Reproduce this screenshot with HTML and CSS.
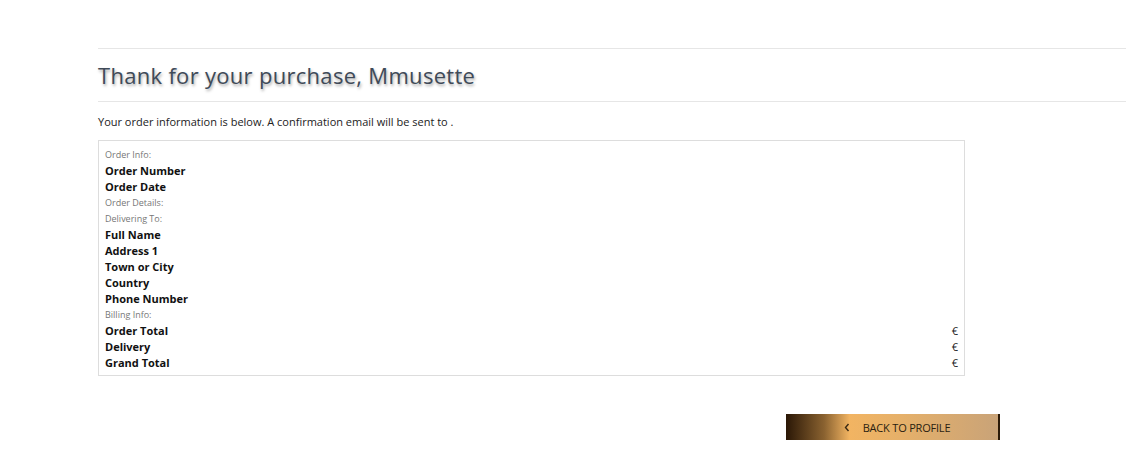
FILE: index.html
```html
<!DOCTYPE html>
<html>
<head>
<meta charset="utf-8">
<link rel="stylesheet" href="styles.css">
</head>
<body>
<div class="page">
  <div class="title-block">
    <h1 class="title">Thank for your purchase, Mmusette</h1>
  </div>
  <p class="intro">Your order information is below. A confirmation email will be sent to .</p>
  <div class="order-box">
    <div class="row label">Order Info:</div>
    <div class="row key">Order Number</div>
    <div class="row key">Order Date</div>
    <div class="row label">Order Details:</div>
    <div class="row label">Delivering To:</div>
    <div class="row key">Full Name</div>
    <div class="row key">Address 1</div>
    <div class="row key">Town or City</div>
    <div class="row key">Country</div>
    <div class="row key">Phone Number</div>
    <div class="row label">Billing Info:</div>
    <div class="row key money"><span>Order Total</span><span class="euro">€</span></div>
    <div class="row key money"><span>Delivery</span><span class="euro">€</span></div>
    <div class="row key money"><span>Grand Total</span><span class="euro">€</span></div>
  </div>
  <div class="actions">
    <a class="back-btn" href="#">
      <svg class="chev" width="6" height="9" viewBox="0 0 6 9"><path d="M4.5 1 L1.5 4.5 L4.5 8" fill="none" stroke="#3a2a14" stroke-width="1.4"/></svg>
      <span>BACK TO PROFILE</span>
    </a>
  </div>
</div>
</body>
</html>
```

FILE: styles.css
```css
html, body {
  margin: 0;
  padding: 0;
  background: #fff;
  font-family: "Open Sans", "Liberation Sans", sans-serif;
}
.page {
  padding: 48px 0 0 98px;
}
.title-block {
  border-top: 1px solid #e6e6e6;
  border-bottom: 1px solid #e6e6e6;
  height: 52px;
  display: flex;
  align-items: center;
}
.title {
  margin: 0;
  font-weight: 400;
  font-size: 22px;
  color: #3f4a58;
  text-shadow: 1px 2px 3px rgba(0,0,0,0.35);
  letter-spacing: 0.3px;
}
.intro {
  margin: 12px 0 0 0;
  font-size: 11px;
  line-height: 16px;
  color: #222;
}
.order-box {
  margin-top: 10px;
  width: 853px;
  border: 1px solid #dddddd;
  padding: 6px 6px 4px 6px;
}
.row {
  height: 16px;
  line-height: 16px;
}
.label {
  font-size: 9px;
  color: #777;
}
.key {
  font-size: 11px;
  font-weight: 700;
  color: #111;
}
.money {
  display: flex;
  justify-content: space-between;
}
.euro {
  font-weight: 400;
  font-size: 11px;
  color: #222;
}
.actions {
  margin-top: 38px;
  padding-left: 688px;
}
.back-btn {
  display: flex;
  align-items: center;
  justify-content: center;
  gap: 13px;
  width: 214px;
  height: 26px;
  padding-left: 10px;
  box-sizing: border-box;
  border-right: 2px solid #2b1a08;
  background: linear-gradient(90deg, #2a1706 0%, #8a6230 18%, #f2b462 30%, #e5b06a 55%, #c9a378 100%);
  color: #2a1e10;
  font-size: 11px;
  text-decoration: none;
  letter-spacing: -0.2px;
}
.chev {
  display: block;
}
```
